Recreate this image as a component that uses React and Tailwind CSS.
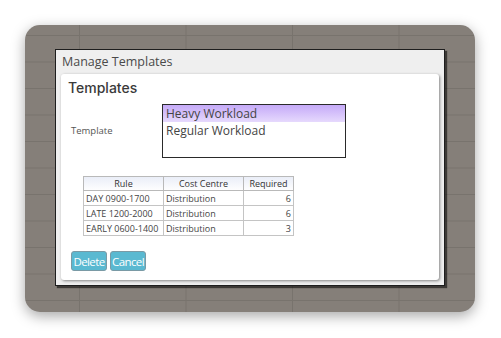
export default function App() {
  const rows = [
    { rule: 'DAY 0900-1700', centre: 'Distribution', req: 6 },
    { rule: 'LATE 1200-2000', centre: 'Distribution', req: 6 },
    { rule: 'EARLY 0600-1400', centre: 'Distribution', req: 3 },
  ]

  return (
    <div className="w-[501px] h-[338px] bg-white pt-[25px] pl-[25px] font-['Open_Sans',sans-serif]">
      {/* gray canvas with grid */}
      <div className="w-[450px] h-[287px] rounded-[15px] bg-[#857f79] shadow-[0_4px_14px_rgba(0,0,0,0.35)] bg-[linear-gradient(#78736d_1px,transparent_1px),linear-gradient(90deg,#78736d_1px,transparent_1px)] bg-[size:106.5px_26.5px] bg-[position:54px_10px] pt-[24px] pl-[30px]">
        {/* dialog window */}
        <div className="w-[390px] h-[237px] bg-[#efefef] border border-[#1e1e1e] shadow-[2px_2px_1px_rgba(0,0,0,0.55)] flex flex-col">
          <div className="h-[24px] pl-[6px] pt-[3px] text-[12.5px] leading-[18px] text-[#4a4a4a]">Manage Templates</div>
          <div className="mx-[5px] mb-[5px] flex-1 bg-white rounded-[3px] shadow-[1px_1px_3px_rgba(0,0,0,0.45)] flex flex-col">
            <div className="pl-[7px] pt-[5px] h-[30px] text-[14px] leading-[18px] font-medium text-[#3a3a3a] font-['Inter',sans-serif]">Templates</div>
            <div className="flex items-center h-[54px]">
              <div className="w-[101px] pl-[10px] text-[9.5px] text-[#555]">Template</div>
              <div className="w-[184px] h-[54px] border border-[#2a2a2a] flex flex-col">
                <div className="h-[17px] bg-[linear-gradient(#c5aaf8,#e6d9fd)] pl-[3px] text-[12px] leading-[17px] text-[#444]">Heavy Workload</div>
                <div className="h-[18px] pl-[3px] text-[12px] leading-[18px] text-[#444]">Regular Workload</div>
              </div>
            </div>
            <div className="pl-[22px] pt-[18px]">
              <table className="border-collapse text-[9px] text-[#444]">
                <thead>
                  <tr className="bg-[linear-gradient(#eaeef8,#ffffff)] h-[14px]">
                    <th className="w-[80px] border border-[#b9b9b9] font-normal text-[#333] leading-[12px]">Rule</th>
                    <th className="w-[80px] border border-[#b9b9b9] font-normal text-[#333] leading-[12px]">Cost Centre</th>
                    <th className="w-[50px] border border-[#b9b9b9] font-normal text-[#333] leading-[12px]">Required</th>
                  </tr>
                </thead>
                <tbody>
                  {rows.map((r) => (
                    <tr key={r.rule} className="h-[15px]">
                      <td className="border border-[#c4c4c4] px-[2px] leading-[13px]">{r.rule}</td>
                      <td className="border border-[#c4c4c4] px-[2px] leading-[13px]">{r.centre}</td>
                      <td className="border border-[#c4c4c4] px-[2px] leading-[13px] text-right">{r.req}</td>
                    </tr>
                  ))}
                </tbody>
              </table>
            </div>
            <div className="flex gap-[3px] pl-[10px] pt-[15px]">
              <button className="w-[36px] h-[20px] rounded-[3px] bg-[#5ab9d1] border border-[#7a9aa5] text-white text-[11.5px] tracking-[-0.6px] leading-[17px]">Delete</button>
              <button className="w-[36px] h-[20px] rounded-[3px] bg-[#5ab9d1] border border-[#7a9aa5] text-white text-[11.5px] tracking-[-0.6px] leading-[17px]">Cancel</button>
            </div>
          </div>
        </div>
      </div>
    </div>
  )
}
